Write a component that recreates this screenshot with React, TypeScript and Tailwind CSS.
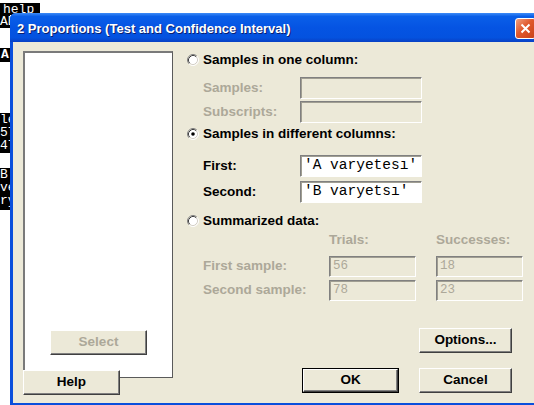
import React from 'react';

const sans = "font-['Liberation_Sans',Arial,sans-serif]";
const mono = "font-['Liberation_Mono','Courier_New',monospace]";

function Radio({checked = false}: {checked?: boolean}) {
  return (
    <svg width="12" height="12" viewBox="0 0 12 12" className="shrink-0">
      <circle cx="6" cy="6" r="5" fill="#fff" />
      <path d="M9.89 2.11 A5.5 5.5 0 0 0 2.11 9.89" stroke="#808080" fill="none" />
      <path d="M9.18 2.82 A4.5 4.5 0 0 0 2.82 9.18" stroke="#404040" fill="none" />
      <path d="M9.89 2.11 A5.5 5.5 0 0 1 2.11 9.89" stroke="#ffffff" fill="none" />
      <path d="M9.18 2.82 A4.5 4.5 0 0 1 2.82 9.18" stroke="#d4d0c8" fill="none" />
      {checked && <circle cx="6" cy="6" r="1.8" fill="#000" />}
    </svg>
  );
}

function Btn({
  label,
  w,
  disabled = false,
  isDefault = false
}: {
  label: string;
  w: string;
  disabled?: boolean;
  isDefault?: boolean;
}) {
  return (
    <div className={`${w} h-[25px] ${isDefault ? 'border border-black' : ''}`}>
      <div
        className={`flex h-full w-full items-center justify-center border border-t-white border-l-white border-r-[#404040] border-b-[#404040] bg-[#ece9d8] text-[13.5px] font-bold shadow-[inset_-1px_-1px_0_#808080] ${
          disabled ? 'text-[#aca899]' : 'text-black'
        }`}
      >
        {label}
      </div>
    </div>
  );
}

function Field({
  w,
  value,
  enabled = false,
  h = 'h-[22px]'
}: {
  w: string;
  value?: string;
  enabled?: boolean;
  h?: string;
}) {
  return (
    <div
      className={`${w} ${h} flex items-center overflow-hidden whitespace-nowrap border border-t-[#808080] border-l-[#808080] border-r-white border-b-white pl-[3px] font-normal shadow-[inset_1px_1px_0_#a09e92] ${mono} ${
        enabled ? 'bg-white text-[14.5px] text-black' : 'bg-[#ece9d8] text-[12.5px] text-[#aca899]'
      }`}
    >
      {value}
    </div>
  );
}

function Behind() {
  const box = `absolute left-0 overflow-hidden bg-black text-white ${mono} text-[13px] leading-[13px]`;
  return (
    <>
      <div className={`${box} top-[3px] h-[12px] w-[40px] pl-[3px] leading-[12px]`}>help</div>
      <div className={`${box} top-[15px] h-[13px] w-[10px]`}>AD</div>
      <div className={`${box} top-[48px] h-[14px] w-[10px] pl-[1px] font-bold`}>A</div>
      <div className={`${box} top-[113px] h-[40px] w-[10px]`}>
        <div>le</div>
        <div>57</div>
        <div>47</div>
      </div>
      <div className={`${box} top-[168px] h-[42px] w-[10px]`}>
        <div>B</div>
        <div>ve</div>
        <div>ry</div>
      </div>
    </>
  );
}

export default function App() {
  const label = 'h-[22px] w-[113px] flex items-center pl-[16px]';
  return (
    <div className={`relative h-[405px] w-[534px] overflow-hidden bg-white ${sans}`}>
      <Behind />
      <div className="absolute left-[10px] top-[13px] flex h-[393px] w-[540px] flex-col rounded-t-[6px] bg-[#0a4fdc]">
        {/* title bar */}
        <div className="flex h-[29px] shrink-0 items-center rounded-t-[6px] bg-[linear-gradient(#3d8bf7_0%,#0a5fe8_12%,#0554e3_50%,#0452df_85%,#0840c4_100%)] pl-[7px] pt-[2px]">
          <span className="text-[13px] font-bold text-white [text-shadow:1px_1px_0_#0a1f6e]">
            2 Proportions (Test and Confidence Interval)
          </span>
          <div className="ml-auto mr-[14px] flex h-[21px] w-[21px] items-center justify-center rounded-[3px] border border-white bg-[linear-gradient(135deg,#f0a080,#e0582c_45%,#c8401a)]">
            <svg width="11" height="11" viewBox="0 0 11 11">
              <path d="M1.5 1.5 L9.5 9.5 M9.5 1.5 L1.5 9.5" stroke="#fff" strokeWidth="2" />
            </svg>
          </div>
        </div>
        {/* body */}
        <div className="mb-[3px] ml-[3px] flex flex-1 bg-[#ece9d8] pl-[10px] pt-[9px]">
          <div className="flex w-[150px] flex-col">
            <div className="flex h-[327px] flex-col items-center justify-end border border-[#5a5a5a] border-l-2 border-t-2 border-l-[#7a7a7a] border-t-[#7a7a7a] bg-white pb-[22px]">
              <Btn label="Select" w="w-[97px]" disabled />
            </div>
            <div className="relative -mt-[8px]">
              <Btn label="Help" w="w-[97px]" />
            </div>
          </div>
          <div className="ml-[14px] flex w-[336px] flex-col text-[13.5px] font-bold">
            <div className="flex h-[18px] items-center gap-[4px]">
              <Radio />
              <span>Samples in one column:</span>
            </div>
            <div className="mt-[8px] flex text-[#aca899]">
              <div className={label}>Samples:</div>
              <Field w="w-[122px]" />
            </div>
            <div className="mt-[2px] flex text-[#aca899]">
              <div className={label}>Subscripts:</div>
              <Field w="w-[122px]" />
            </div>
            <div className="mt-[2px] flex h-[18px] items-center gap-[4px]">
              <Radio checked />
              <span>Samples in different columns:</span>
            </div>
            <div className="mt-[12px] flex">
              <div className={label}>First:</div>
              <Field w="w-[122px]" value="'A varyetesı'" enabled />
            </div>
            <div className="mt-[4px] flex">
              <div className={label}>Second:</div>
              <Field w="w-[122px]" value="'B varyetsı'" enabled />
            </div>
            <div className="mt-[9px] flex h-[18px] items-center gap-[4px]">
              <Radio />
              <span>Summarized data:</span>
            </div>
            <div className="mt-[2px] flex h-[16px] items-center text-[#aca899]">
              <div className="ml-[142px] w-[107px]">Trials:</div>
              <div>Successes:</div>
            </div>
            <div className="mt-[8px] flex items-center text-[#aca899]">
              <div className="w-[142px] pl-[16px]">First sample:</div>
              <Field w="w-[87px]" h="h-[21px]" value="56" />
              <div className="ml-[20px]">
                <Field w="w-[87px]" h="h-[21px]" value="18" />
              </div>
            </div>
            <div className="mt-[3px] flex items-center text-[#aca899]">
              <div className="w-[142px] pl-[16px]">Second sample:</div>
              <Field w="w-[87px]" h="h-[21px]" value="78" />
              <div className="ml-[20px]">
                <Field w="w-[87px]" h="h-[21px]" value="23" />
              </div>
            </div>
            <div className="mt-[27px] flex">
              <div className="ml-[232px]">
                <Btn label="Options..." w="w-[93px]" />
              </div>
            </div>
            <div className="mt-[15px] flex">
              <div className="ml-[115px]">
                <Btn label="OK" w="w-[97px]" isDefault />
              </div>
              <div className="ml-[20px]">
                <Btn label="Cancel" w="w-[93px]" />
              </div>
            </div>
          </div>
        </div>
      </div>
    </div>
  );
}
